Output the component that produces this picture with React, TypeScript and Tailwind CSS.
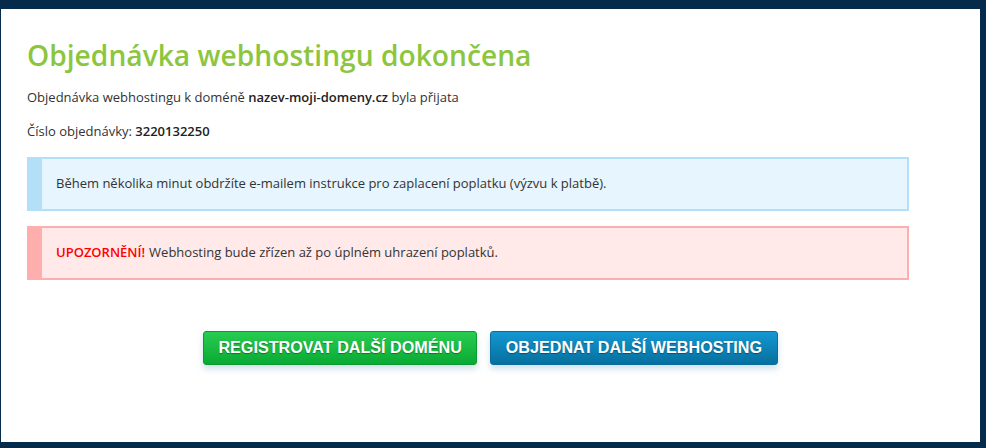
export default function App() {
  return (
    <div className="h-[448px] w-[986px] bg-[#062a49] pt-[9px] pl-[1px] pr-[6px] pb-[6px]">
      <div className="h-full bg-white pl-[26px] pr-[71px] pt-[27px] font-['Open_Sans',sans-serif] text-[13px] text-[#333]">
        {/* Title */}
        <h1 className="text-[28.2px] font-semibold leading-[38px] text-[#8cc63f]">Objednávka webhostingu dokončena</h1>

        <p className="mt-[14px] leading-[18px]">
          Objednávka webhostingu k doméně <b className="font-semibold text-[#222]">nazev-moji-domeny.cz</b> byla přijata
        </p>
        <p className="mt-[16px] leading-[18px]">
          Číslo objednávky: <b className="font-semibold text-[#222]">3220132250</b>
        </p>

        {/* Info */}
        <div className="mt-[17px] flex h-[54px] items-center border-2 border-l-[15px] border-[#b3e0f8] bg-[#e6f5fe] pl-[14px]">
          Během několika minut obdržíte e-mailem instrukce pro zaplacení poplatku (výzvu k platbě).
        </div>

        {/* Warning */}
        <div className="mt-[15px] flex h-[54px] items-center border-2 border-l-[15px] border-[#ffaeae] bg-[#ffe9e9] pl-[14px]">
          <span className="mr-1 font-semibold text-[#f00]">UPOZORNĚNÍ!</span> Webhosting bude zřízen až po úplném uhrazení poplatků.
        </div>

        {/* Buttons */}
        <div className="-ml-[26px] -mr-[71px] mt-[51px] flex justify-center gap-[13px]">
          <button className="flex h-[34px] w-[274px] items-center justify-center rounded-[3px] border border-[#0c9a2e] bg-gradient-to-b from-[#26cc50] to-[#08aa34] font-['Liberation_Sans',Arial,sans-serif] text-[17px] font-bold text-white shadow-[0_4px_6px_rgba(120,170,200,0.35)] [text-shadow:0_1px_1px_rgba(0,0,0,0.35)]">
            <span className="inline-block scale-x-[0.95] whitespace-nowrap">REGISTROVAT DALŠÍ DOMÉNU</span>
          </button>
          <button className="flex h-[34px] w-[288px] items-center justify-center rounded-[3px] border border-[#0a6d9c] bg-gradient-to-b from-[#1497d2] to-[#06709f] font-['Liberation_Sans',Arial,sans-serif] text-[17px] font-bold text-white shadow-[0_4px_6px_rgba(120,170,200,0.35)] [text-shadow:0_1px_1px_rgba(0,0,0,0.35)]">
            <span className="inline-block scale-x-[0.95] whitespace-nowrap">OBJEDNAT DALŠÍ WEBHOSTING</span>
          </button>
        </div>
      </div>
    </div>
  );
}
